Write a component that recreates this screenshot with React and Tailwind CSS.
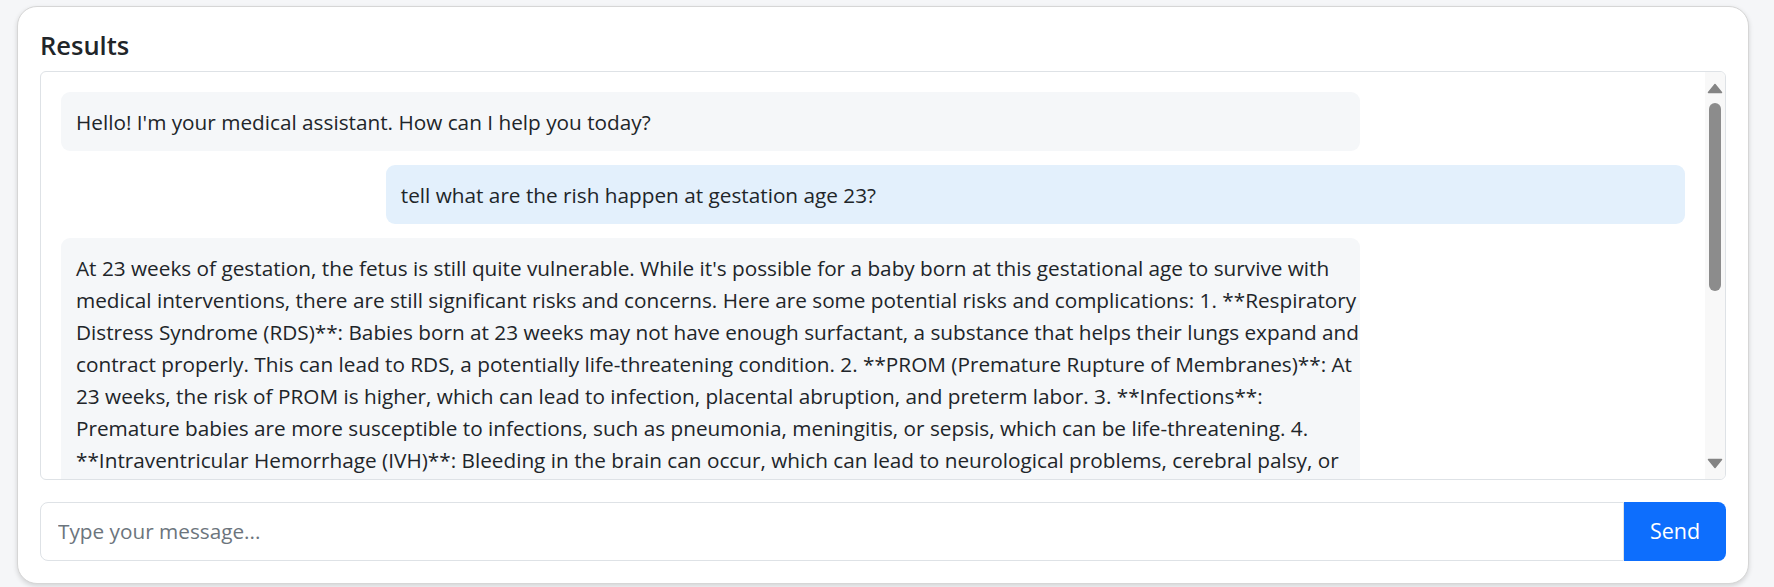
import React from "react";

const FONT = { fontFamily: '"Open Sans", "Noto Sans", sans-serif' };

const answerLines = [
  "At 23 weeks of gestation, the fetus is still quite vulnerable. While it's possible for a baby born at this gestational age to survive with",
  "medical interventions, there are still significant risks and concerns. Here are some potential risks and complications: 1. **Respiratory",
  "Distress Syndrome (RDS)**: Babies born at 23 weeks may not have enough surfactant, a substance that helps their lungs expand and",
  "contract properly. This can lead to RDS, a potentially life-threatening condition. 2. **PROM (Premature Rupture of Membranes)**: At",
  "23 weeks, the risk of PROM is higher, which can lead to infection, placental abruption, and preterm labor. 3. **Infections**:",
  "Premature babies are more susceptible to infections, such as pneumonia, meningitis, or sepsis, which can be life-threatening. 4.",
  "**Intraventricular Hemorrhage (IVH)**: Bleeding in the brain can occur, which can lead to neurological problems, cerebral palsy, or",
  "developmental delays. 5. **Necrotizing Enterocolitis (NEC)**: A serious intestinal condition that can affect premature infants.",
];

function Bubble({ user, children }) {
  return (
    <div
      className={
        "w-[80%] rounded-[9px] px-[15px] py-[13.5px] text-[20.75px] leading-[32px] text-[#212529] " +
        (user ? "self-end bg-[#e3f0fc]" : "self-start bg-[#f5f7f9]")
      }
    >
      {children}
    </div>
  );
}

function Scrollbar() {
  return (
    <div className="flex w-[20px] shrink-0 flex-col items-center bg-[#f8f8f8]">
      <svg width="16" height="11" viewBox="0 0 16 11" className="mt-[11px]">
        <path d="M8 1.5 L14.5 9.5 L1.5 9.5 Z" fill="#848484" stroke="#848484" strokeWidth="1.5" strokeLinejoin="round" />
      </svg>
      <div className="mt-[9px] h-[188px] w-[12px] rounded-full bg-[#8c8c8c]" />
      <div className="flex-1" />
      <svg width="16" height="11" viewBox="0 0 16 11" className="mb-[10px]">
        <path d="M1.5 1.5 L14.5 1.5 L8 9.5 Z" fill="#848484" stroke="#848484" strokeWidth="1.5" strokeLinejoin="round" />
      </svg>
    </div>
  );
}

export default function App() {
  return (
    <div className="min-h-[587px] bg-[#f5f6f8] pl-[17px] pr-[25px] pt-[6px]" style={FONT}>
      <div className="flex h-[578px] flex-col rounded-[20px] border border-[#d6d6d6] bg-white p-[22px] shadow-[0_2px_5px_rgba(0,0,0,0.14)]">
        <h2 className="mb-[10px] text-[25.5px] font-semibold leading-[32px] text-[#212529]">Results</h2>
        <div className="flex h-[409px] overflow-hidden rounded-[6px] border border-[#dee2e6] bg-white">
          <div className="flex flex-1 flex-col gap-[14px] overflow-hidden p-[20px]">
            <Bubble>Hello! I'm your medical assistant. How can I help you today?</Bubble>
            <Bubble user>tell what are the rish happen at gestation age 23?</Bubble>
            <Bubble>
              {answerLines.map((l, i) => (
                <React.Fragment key={i}>
                  <span className="whitespace-nowrap">{l}</span>
                  {i < answerLines.length - 1 && <br />}
                </React.Fragment>
              ))}
            </Bubble>
          </div>
          <Scrollbar />
        </div>
        <div className="mt-[22px] flex h-[59px]">
          <input
            type="text"
            placeholder="Type your message..."
            className="min-w-0 flex-1 rounded-l-[8px] border border-[#dee2e6] bg-white px-[17px] text-[20.75px] text-[#212529] outline-none placeholder:text-[#6c757d]"
            style={FONT}
          />
          <button className="w-[102px] rounded-r-[8px] bg-[#0d6efd] text-[21.5px] text-white" style={FONT}>
            Send
          </button>
        </div>
      </div>
    </div>
  );
}
